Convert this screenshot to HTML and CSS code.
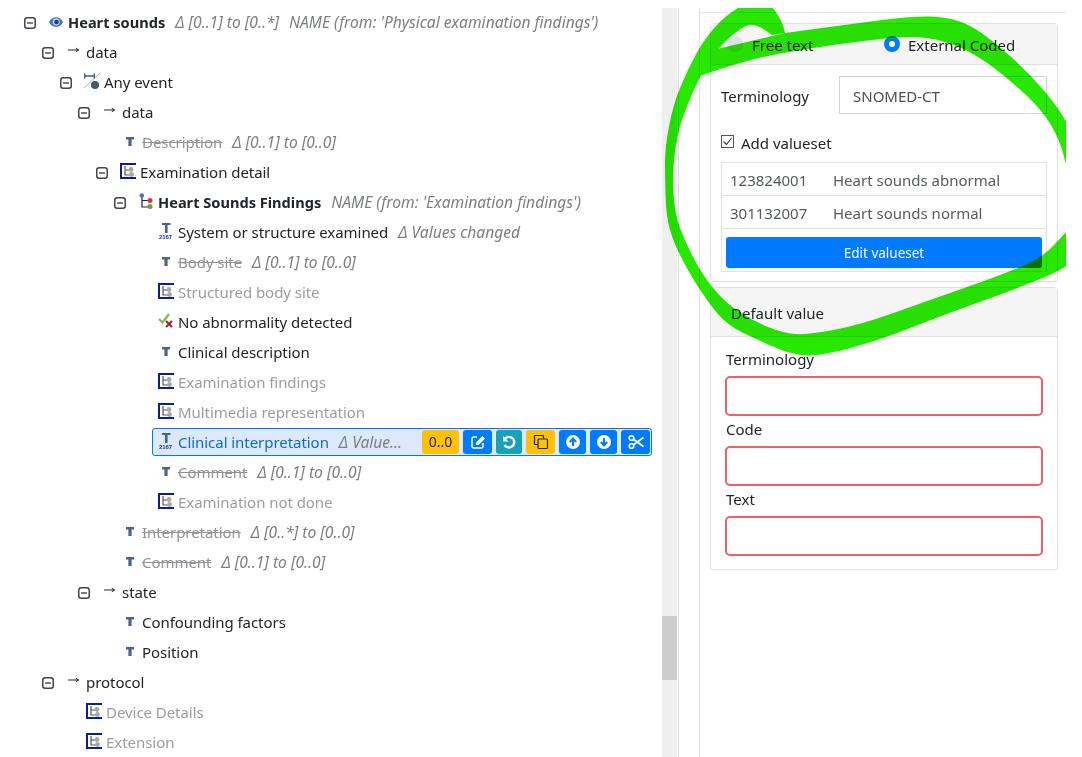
FILE: index.html
```html
<!DOCTYPE html>
<html lang="en">
<head>
<meta charset="utf-8">
<title>Heart sounds</title>
<link rel="stylesheet" href="styles.css">
</head>
<body>
<svg class="defs" aria-hidden="true">
  <symbol id="i-toggle" viewBox="0 0 12 12"><rect x=".75" y=".75" width="10.500" height="10.500" rx="2.500" fill="none" stroke="#40444c" stroke-width="1.500"/><path d="M3 6h6" stroke="#40444c" stroke-width="1.400"/></symbol>
  <symbol id="i-eye" viewBox="0 0 20 16" overflow="visible"><path d="M1 9C4 2.500 12 2.500 15 9 12 15.500 4 15.500 1 9z" fill="#3f73b5"/><circle cx="8.200" cy="8.800" r="3.600" fill="#bcd3ea"/><circle cx="8.500" cy="9" r="2.300" fill="#1d3f75"/></symbol>
  <symbol id="i-arrow" viewBox="0 0 20 16"><path d="M2 7h10.500M9.800 5.200l2.800 1.800-2.800 1.800" fill="none" stroke="#222" stroke-width="1"/></symbol>
  <symbol id="i-event" viewBox="0 0 20 16" overflow="visible"><path d="M0 15L16 0" stroke="#b0b0b0" stroke-width="1"/><path d="M.7 .5v5M10.300 .5v5M.7 3h9.600" fill="none" stroke="#3d5d8f" stroke-width="1.400"/><circle cx="11" cy="12" r="4" fill="#34597f"/><circle cx="11" cy="12" r="1.500" fill="#b3324a"/></symbol>
  <symbol id="i-cluster" viewBox="0 0 20 16"><path d="M4 2v12h7M4 7.500h7" fill="none" stroke="#222" stroke-width="1.200"/><circle cx="3.800" cy="2.500" r="2.300" fill="#4a74b8"/><circle cx="12" cy="7.500" r="2.500" fill="#b8434e"/><circle cx="12" cy="13.500" r="2.500" fill="#6f9a48"/></symbol>
  <symbol id="i-struct" viewBox="0 0 20 16"><path d="M16 1H1v14h15" fill="none" stroke="#0a1f8f" stroke-width="2"/><path d="M5 3v9h6M5 7h6" fill="none" stroke="#555" stroke-width="1.200"/><circle cx="11" cy="6.500" r="2.400" fill="#a5a8ac"/><circle cx="11.500" cy="11.500" r="2.400" fill="#a5a8ac"/></symbol>
  <symbol id="i-t" viewBox="0 0 20 16"><path d="M4 4h8v2.500H9.600V13H6.400V6.500H4z" fill="#4b628f"/></symbol>
  <symbol id="i-tc" viewBox="0 0 20 16" overflow="visible"><path d="M4 0h8.500v2H9.600v8H6.900V2H4z" fill="#4b628f"/><text class="tiny" x="1" y="16" textLength="13">2167</text></symbol>
  <symbol id="i-check" viewBox="0 0 20 16"><path d="M1 6l3.500 3.500L11 1" fill="none" stroke="#86b356" stroke-width="2.200"/><path d="M8 8l6 6M14 8l-6 6" stroke="#a81f2a" stroke-width="2"/></symbol>
</svg>
<div class="stage">
  <div class="left">
    <div class="tree-pane">
      <ul class="tree root">
        <li>
          <div class="row"><span class="tg"><svg class="tg-i"><use href="#i-toggle"/></svg></span><div class="node"><svg class="ico"><use href="#i-eye"/></svg><span class="lbl b">Heart sounds</span><span class="meta">Δ [0..1] to [0..*]</span><span class="meta">NAME (from: 'Physical examination findings')</span></div></div>
          <ul class="tree">
            <li>
              <div class="row"><span class="tg"><svg class="tg-i"><use href="#i-toggle"/></svg></span><div class="node"><svg class="ico"><use href="#i-arrow"/></svg><span class="lbl">data</span></div></div>
              <ul class="tree">
                <li>
                  <div class="row"><span class="tg"><svg class="tg-i"><use href="#i-toggle"/></svg></span><div class="node"><svg class="ico"><use href="#i-event"/></svg><span class="lbl">Any event</span></div></div>
                  <ul class="tree">
                    <li>
                      <div class="row"><span class="tg"><svg class="tg-i"><use href="#i-toggle"/></svg></span><div class="node"><svg class="ico"><use href="#i-arrow"/></svg><span class="lbl">data</span></div></div>
                      <ul class="tree">
                        <li><div class="row"><div class="node leaf"><svg class="ico"><use href="#i-t"/></svg><span class="lbl del">Description</span><span class="meta">Δ [0..1] to [0..0]</span></div></div></li>
                        <li>
                          <div class="row"><span class="tg"><svg class="tg-i"><use href="#i-toggle"/></svg></span><div class="node"><svg class="ico"><use href="#i-struct"/></svg><span class="lbl">Examination detail</span></div></div>
                          <ul class="tree">
                            <li>
                              <div class="row"><span class="tg"><svg class="tg-i"><use href="#i-toggle"/></svg></span><div class="node"><svg class="ico"><use href="#i-cluster"/></svg><span class="lbl b">Heart Sounds Findings</span><span class="meta">NAME (from: 'Examination findings')</span></div></div>
                              <ul class="tree">
                                <li><div class="row"><div class="node leaf"><svg class="ico"><use href="#i-tc"/></svg><span class="lbl">System or structure examined</span><span class="meta">Δ Values changed</span></div></div></li>
                                <li><div class="row"><div class="node leaf"><svg class="ico"><use href="#i-t"/></svg><span class="lbl del">Body site</span><span class="meta">Δ [0..1] to [0..0]</span></div></div></li>
                                <li><div class="row"><div class="node leaf"><svg class="ico"><use href="#i-struct"/></svg><span class="lbl dim">Structured body site</span></div></div></li>
                                <li><div class="row"><div class="node leaf"><svg class="ico"><use href="#i-check"/></svg><span class="lbl">No abnormality detected</span></div></div></li>
                                <li><div class="row"><div class="node leaf"><svg class="ico"><use href="#i-t"/></svg><span class="lbl">Clinical description</span></div></div></li>
                                <li><div class="row"><div class="node leaf"><svg class="ico"><use href="#i-struct"/></svg><span class="lbl dim">Examination findings</span></div></div></li>
                                <li><div class="row"><div class="node leaf"><svg class="ico"><use href="#i-struct"/></svg><span class="lbl dim">Multimedia representation</span></div></div></li>
                                <li>
                                  <div class="row">
                                    <div class="node leaf selected">
                                      <svg class="ico"><use href="#i-tc"/></svg>
                                      <span class="lbl sel-lbl">Clinical interpretation</span>
                                      <span class="meta">Δ Value...</span>
                                      <div class="actions">
                                        <button class="btn warn w-occ">0..0</button>
                                        <button class="btn pri w-29"><svg class="bi" viewBox="0 0 16 16"><path d="M7 3H3.500A1.500 1.500 0 0 0 2 4.500v8A1.500 1.500 0 0 0 3.500 14h8a1.500 1.500 0 0 0 1.500-1.500V9" fill="none" stroke="#fff" stroke-width="1.500"/><path d="M6 8.500L12.500 2 15 4.500 8.500 11H6z" fill="#fff"/></svg></button>
                                        <button class="btn info w-26"><svg class="bi" viewBox="0 0 16 16"><path d="M4.300 4.300A5.300 5.300 0 1 1 3.500 11" fill="none" stroke="#fff" stroke-width="2.400"/><path d="M2 2v5.500h5.500z" fill="#fff"/></svg></button>
                                        <button class="btn warn w-29"><svg class="bi" viewBox="0 0 16 16"><path d="M10.500 4.500V2.500a1 1 0 0 0-1-1h-7a1 1 0 0 0-1 1v7a1 1 0 0 0 1 1h2" fill="none" stroke="#212529" stroke-width="1.200"/><rect x="5" y="5" width="9.500" height="9.500" rx="1" fill="none" stroke="#212529" stroke-width="1.200"/></svg></button>
                                        <button class="btn pri w-27"><svg class="bi" viewBox="0 0 16 16"><circle cx="8" cy="8" r="7" fill="#fff"/><path d="M8 12V5M4.800 8L8 4.500 11.200 8" fill="none" stroke="#007bff" stroke-width="2"/></svg></button>
                                        <button class="btn pri w-27"><svg class="bi" viewBox="0 0 16 16"><circle cx="8" cy="8" r="7" fill="#fff"/><path d="M8 4v7M4.800 8L8 11.500 11.200 8" fill="none" stroke="#007bff" stroke-width="2"/></svg></button>
                                        <button class="btn pri w-29"><svg class="bi" viewBox="0 0 16 16"><circle cx="3.500" cy="4" r="2.300" fill="none" stroke="#fff" stroke-width="1.600"/><circle cx="3.500" cy="12" r="2.300" fill="none" stroke="#fff" stroke-width="1.600"/><path d="M5.500 5.200L15.500 12.500M5.500 10.800L15.500 3.500" stroke="#fff" stroke-width="1.700"/></svg></button>
                                      </div>
                                    </div>
                                  </div>
                                </li>
                                <li><div class="row"><div class="node leaf"><svg class="ico"><use href="#i-t"/></svg><span class="lbl del">Comment</span><span class="meta">Δ [0..1] to [0..0]</span></div></div></li>
                                <li><div class="row"><div class="node leaf"><svg class="ico"><use href="#i-struct"/></svg><span class="lbl dim">Examination not done</span></div></div></li>
                              </ul>
                            </li>
                          </ul>
                        </li>
                      </ul>
                    </li>
                    <li>
                      <ul class="tree">
                        <li><div class="row"><div class="node leaf"><svg class="ico"><use href="#i-t"/></svg><span class="lbl del">Interpretation</span><span class="meta">Δ [0..*] to [0..0]</span></div></div></li>
                        <li><div class="row"><div class="node leaf"><svg class="ico"><use href="#i-t"/></svg><span class="lbl del">Comment</span><span class="meta">Δ [0..1] to [0..0]</span></div></div></li>
                      </ul>
                    </li>
                    <li>
                      <div class="row"><span class="tg"><svg class="tg-i"><use href="#i-toggle"/></svg></span><div class="node"><svg class="ico"><use href="#i-arrow"/></svg><span class="lbl">state</span></div></div>
                      <ul class="tree">
                        <li><div class="row"><div class="node leaf"><svg class="ico"><use href="#i-t"/></svg><span class="lbl">Confounding factors</span></div></div></li>
                        <li><div class="row"><div class="node leaf"><svg class="ico"><use href="#i-t"/></svg><span class="lbl">Position</span></div></div></li>
                      </ul>
                    </li>
                  </ul>
                </li>
              </ul>
            </li>
            <li>
              <div class="row"><span class="tg"><svg class="tg-i"><use href="#i-toggle"/></svg></span><div class="node"><svg class="ico"><use href="#i-arrow"/></svg><span class="lbl">protocol</span></div></div>
              <ul class="tree">
                <li><div class="row"><div class="node leaf"><svg class="ico"><use href="#i-struct"/></svg><span class="lbl dim">Device Details</span></div></div></li>
                <li><div class="row"><div class="node leaf"><svg class="ico"><use href="#i-struct"/></svg><span class="lbl dim">Extension</span></div></div></li>
              </ul>
            </li>
          </ul>
        </li>
      </ul>
    </div>
    <div class="scrollbar"><div class="thumb"></div></div>
  </div>
  <div class="right">
    <div class="right-inner">
      <section class="card">
        <header class="card-head radios">
          <label class="radio"><span class="dot"></span>Free text</label>
          <label class="radio on"><span class="dot"></span>External Coded</label>
        </header>
        <div class="card-body">
          <div class="term-row"><span class="term-lbl">Terminology</span><div class="term-input">SNOMED-CT</div></div>
          <label class="check"><svg class="check-box" viewBox="0 0 13 13"><rect x=".5" y=".5" width="12" height="12" fill="none" stroke="#555"/><path d="M2.500 6.500l3 3 5-6.500" fill="none" stroke="#333" stroke-width="1.100"/></svg>Add valueset</label>
          <div class="vs">
            <div class="vs-row"><span class="vs-code">123824001</span><span>Heart sounds abnormal</span></div>
            <div class="vs-row"><span class="vs-code">301132007</span><span>Heart sounds normal</span></div>
            <div class="vs-foot"><button class="edit">Edit valueset</button></div>
          </div>
        </div>
      </section>
      <section class="card second">
        <header class="card-head plain">Default value</header>
        <div class="card-body form">
          <label class="f-lbl">Terminology</label><div class="f-input"></div>
          <label class="f-lbl">Code</label><div class="f-input"></div>
          <label class="f-lbl">Text</label><div class="f-input"></div>
        </div>
      </section>
    </div>
  </div>
  <svg class="scribble" viewBox="0 8 1066 749" aria-hidden="true">
    <path d="M717 49L785 33L822 28Q860 23 886 19.500Q913 16 930 16.500Q947 17 958.500 21Q970 25 981.500 33Q993 41 1010 56Q1027 71 1040 86Q1053 101 1059.500 111Q1066 121 1075 136L1072 185Q1066 165 1063 153Q1060 141 1051.500 126Q1043 111 1026.500 95.500Q1010 80 993.500 67.500Q977 55 960 47.500Q943 40 926.500 38Q910 36 885 38.500Q860 41 826.500 46Q793 51 768 56Q743 61 700 76Z
    M1075 262L1066 266Q1060 271 1035 281Q1010 291 976.500 303Q943 315 910 328Q877 341 848.500 348.500Q820 356 806.500 355.500Q793 355 776.500 348Q760 341 743.500 333Q727 325 717 313Q707 301 697.500 286Q688 271 680.500 256Q673 241 669.500 228Q666 215 665.500 195Q665 175 665 161.500Q665 148 669 126.500Q673 105 680 88Q687 71 695 56Q703 41 713 29.500Q723 18 730.500 13L738 8Q755 -5 773 8Q783 21 785 33L772 35Q757 23 748.500 25Q740 28 728.500 38.500Q717 49 708.500 62.500Q700 76 693.500 90.500Q687 105 682 120Q677 135 674.500 155Q672 175 673.500 195Q675 215 680 228Q685 241 692.500 256Q700 271 711.500 286Q723 301 738 311Q753 321 768 327Q783 333 795 334Q807 335 833.500 330Q860 325 893.500 313Q927 301 960 289.500Q993 278 1018 268Q1043 258 1054.500 244.500L1075 222Z" fill="#28e800"/>
  </svg>
</div>
</body>
</html>
```

FILE: styles.css
```css
html, body { margin: 0; padding: 0; background: #fff; }
body {
  font-family: "Noto Sans", "Open Sans", sans-serif;
  font-size: 15px;
  line-height: 24px;
  color: #212529;
  overflow: hidden;
  height: 757px;
}
.defs { display: none; }
.tiny { font-family: "Liberation Sans", sans-serif; font-size: 6px; font-weight: 700; fill: #1a2fb0; }
.stage {
  position: relative;
  display: flex;
  width: 1066px;
  height: 749px;
  margin-top: 8px;
  overflow: hidden;
}
.left {
  display: flex;
  width: 678px;
  flex: none;
  border-right: 1px solid #ddd;
  margin-right: 20px;
}
.tree-pane { width: 662px; flex: none; overflow: hidden; padding-left: 24px; box-sizing: border-box; }
.tree { list-style: none; margin: 0; padding: 0 0 0 18px; }
.tree.root { padding: 0; }
.row { display: flex; align-items: center; height: 30px; padding-right: 10px; }
.tg { width: 24px; flex: none; display: flex; align-items: center; }
.tg-i { width: 12px; height: 12px; display: block; }
.node {
  flex: 1;
  min-width: 0;
  display: flex;
  align-items: center;
  box-sizing: border-box;
  height: 28px;
  padding-bottom: 2px;
  white-space: nowrap;
  letter-spacing: -0.05px;
}
.node.leaf { margin-left: 20px; padding-left: 6px; }
.ico { width: 20px; height: 16px; flex: none; margin-bottom: 2px; overflow: visible; }
.lbl { flex: none; }
.b { font-weight: 700; font-size: 14.600px; letter-spacing: 0; }
.dim { color: #999da3; }
.del { color: #8f9296; text-decoration: line-through; }
.meta { margin-left: 10px; font-style: italic; font-size: 15.600px; letter-spacing: 0; color: #7b7f84; }
.node.selected {
  height: 28px;
  padding: 0 1px 0 5px;
  margin-bottom: 2px;
  border: 1px solid #0a76e6;
  border-radius: 3px;
  background: #dce9fa;
}
.sel-lbl { color: #0f6cc4; }
.actions { margin-left: auto; display: flex; gap: 4px; }
.btn {
  height: 24px;
  padding: 0;
  border: 0;
  border-radius: 3px;
  display: flex;
  align-items: center;
  justify-content: center;
  font: inherit;
  font-size: 14px;
  color: #212529;
}
.warn { background: #ffc107; }
.pri { background: #007bff; }
.info { background: #17a2b8; }
.w-occ { width: 37px; }
.w-29 { width: 29px; }
.w-27 { width: 27px; }
.w-26 { width: 26px; }
.bi { width: 16px; height: 16px; display: block; }
.scrollbar { width: 15px; flex: none; background: #efefef; padding-top: 608px; margin-right: 1px; }
.thumb { height: 64px; background: #cdcdcd; }
.right { flex: 1; min-width: 0; border-left: 1px solid #dee2e6; }
.right-inner {
  margin-top: 4px;
  border-top: 1px solid #e3e6ea;
  padding: 10px 8px 0 10px;
}
.card { border: 1px solid #dfe1e4; border-radius: 4px; }
.second { margin-top: 5px; }
.card-head { background: #f5f5f5; border-bottom: 1px solid #dfe1e4; }
.radios { height: 40px; display: flex; align-items: center; padding-left: 16px; }
.radio { display: flex; align-items: center; width: 157px; padding-top: 2px; }
.dot { width: 16px; height: 16px; border-radius: 50%; background: #dee2e6; margin: 0 9px 2px 0; flex: none; box-sizing: border-box; }
.on .dot { background: #fff; border: 5px solid #007bff; margin-right: 8px; }
.plain { height: 46px; display: flex; align-items: center; padding: 2px 0 0 20px; }
.card-body { padding: 11px 10px 9px; }
.term-row { display: flex; align-items: center; }
.term-lbl { width: 118px; flex: none; padding-top: 2px; }
.term-input {
  flex: 1;
  height: 38px;
  box-sizing: border-box;
  border: 1px solid #ced4da;
  padding: 2px 0 0 13px;
  display: flex;
  align-items: center;
  color: #495057;
}
.check { display: flex; align-items: center; margin-top: 17px; height: 24px; }
.check-box { width: 13px; height: 13px; margin: 0 7px 4px 0; }
.vs { margin-top: 7px; border: 1px solid #dee2e6; color: #555a60; }
.vs-row { display: flex; align-items: center; height: 30px; padding: 2px 0 0 8px; border-bottom: 1px solid #dee2e6; }
.vs-code { width: 103px; flex: none; }
.vs-foot { padding: 8px 4px 3px; }
.edit {
  width: 100%;
  height: 31px;
  border: 0;
  border-radius: 3px;
  background: #007bff;
  color: #fff;
  font: inherit;
  font-size: 13.500px;
  display: block;
}
.form { padding: 10px 14px 12px 14px; }
.f-lbl { display: block; height: 24px; margin-bottom: 5px; padding-left: 1px; }
.f-input {
  height: 40px;
  box-sizing: border-box;
  margin-bottom: 1px;
  border: 2px solid #f0606a;
  border-radius: 5px;
  background: #fff;
}
.scribble {
  position: absolute;
  left: 0;
  top: 0;
  width: 1066px;
  height: 749px;
  mix-blend-mode: multiply;
  pointer-events: none;
}
```
